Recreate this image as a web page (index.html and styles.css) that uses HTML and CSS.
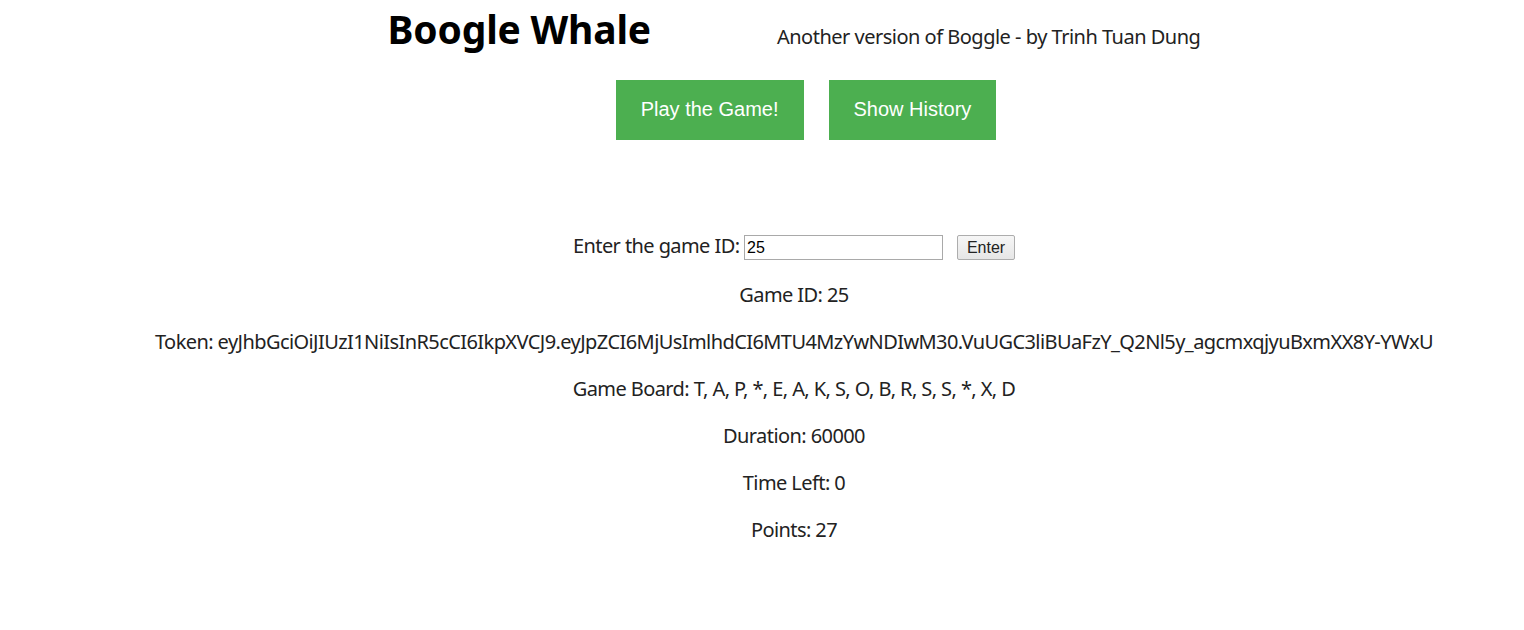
FILE: index.html
```html
<!DOCTYPE html>
<html lang="en">
<head>
<meta charset="utf-8">
<title>Boogle Whale</title>
<link rel="stylesheet" href="styles.css">
</head>
<body>
<div class="page">
  <header class="header">
    <h1 class="title">Boogle Whale</h1>
    <span class="subtitle">Another version of Boggle - by Trinh Tuan Dung</span>
  </header>
  <nav class="actions">
    <button class="green-btn">Play the Game!</button>
    <button class="green-btn">Show History</button>
  </nav>
  <main class="history">
    <p class="lookup">Enter the game ID: <input class="id-input" type="text" value="25"><button class="enter-btn">Enter</button></p>
    <p class="info">Game ID: 25</p>
    <p class="info">Token: eyJhbGciOiJIUzI1NiIsInR5cCI6IkpXVCJ9.eyJpZCI6MjUsImlhdCI6MTU4MzYwNDIwM30.VuUGC3liBUaFzY_Q2Nl5y_agcmxqjyuBxmXX8Y-YWxU</p>
    <p class="info">Game Board: T, A, P, *, E, A, K, S, O, B, R, S, S, *, X, D</p>
    <p class="info">Duration: 60000</p>
    <p class="info">Time Left: 0</p>
    <p class="info">Points: 27</p>
  </main>
</div>
</body>
</html>
```

FILE: styles.css
```css
html, body {
  margin: 0;
  padding: 0;
  background: #ffffff;
}

body {
  font-family: "Noto Sans", "Open Sans", sans-serif;
  color: #222222;
}

.page {
  padding-left: 64px;
}

.header {
  display: flex;
  justify-content: center;
  align-items: baseline;
  gap: 126px;
  height: 62px;
}

.title {
  margin: 2px 0 0 0;
  font-size: 39px;
  font-weight: 700;
  color: #000000;
  letter-spacing: -0.2px;
}

.subtitle {
  font-size: 20px;
  color: #222222;
  letter-spacing: -0.5px;
}

.actions {
  display: flex;
  justify-content: center;
  gap: 25px;
  margin-top: 18px;
  margin-left: 24px;
}

.green-btn {
  background: #4caf50;
  color: #ffffff;
  border: none;
  font-family: "Liberation Sans", Arial, sans-serif;
  font-size: 20px;
  height: 60px;
  padding: 0 25px 2px 25px;
  cursor: pointer;
}

.history {
  margin-top: 92px;
  text-align: center;
}

.info, .lookup {
  margin: 0 0 20px 0;
  font-size: 20px;
  line-height: 27px;
  letter-spacing: -0.58px;
}

.lookup {
  margin-bottom: 21px;
}

.id-input {
  width: 193px;
  height: 21px;
  padding: 1px 2px;
  border: 1px solid #a9a9a9;
  font-family: "Liberation Sans", Arial, sans-serif;
  font-size: 16px;
  letter-spacing: 0;
  vertical-align: middle;
  margin: 0;
}

.enter-btn {
  margin-left: 14px;
  height: 25px;
  width: 58px;
  padding: 0;
  border: 1px solid #adadad;
  border-radius: 2px;
  background: linear-gradient(#f6f6f6, #e6e6e6);
  font-family: "Liberation Sans", Arial, sans-serif;
  font-size: 16px;
  letter-spacing: 0;
  color: #222222;
  vertical-align: middle;
}
```
